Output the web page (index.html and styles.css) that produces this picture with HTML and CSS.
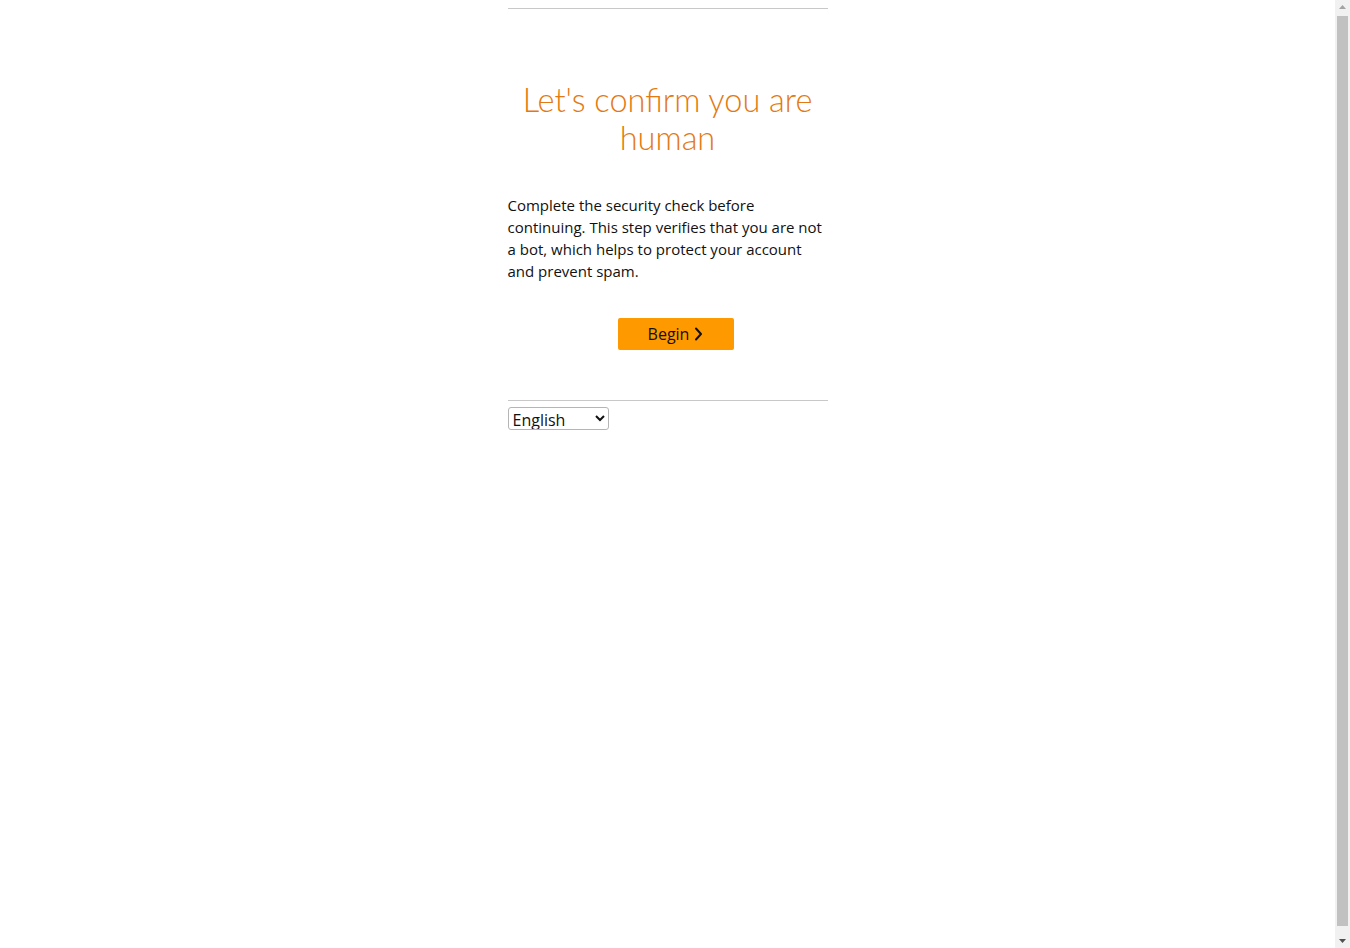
FILE: index.html
```html
<!DOCTYPE html>
<html lang="en">
<head>
    <meta charset="UTF-8">
    <meta name="viewport" content="width=device-width, initial-scale=1.0">
    <title>Security Check</title>
    <link rel="stylesheet" href="styles.css">
</head>
<body>
    <div class="page">
        <hr class="divider">

        <h1 class="title">Let's confirm you are human</h1>

        <p class="intro">Complete the security check before continuing. This step verifies that you are not a bot, which helps to protect your account and prevent spam.</p>

        <div class="actions">
            <button class="begin-btn" type="button">
                Begin
                <svg class="chevron" width="9" height="14" viewBox="0 0 9 14" aria-hidden="true">
                    <path d="M2 1.5 L7 7 L2 12.5" fill="none" stroke="#111" stroke-width="2" stroke-linecap="round" stroke-linejoin="round"/>
                </svg>
            </button>
        </div>

        <hr class="divider">

        <select class="language">
            <option>English</option>
            <option>Deutsch</option>
            <option>Español</option>
            <option>Français</option>
            <option>Italiano</option>
            <option>日本語</option>
        </select>
    </div>

    <!-- window scrollbar -->
    <div class="scrollbar" aria-hidden="true">
        <svg class="scroll-arrow" width="15" height="16" viewBox="0 0 15 16">
            <path d="M4 9 L7.5 5 L11 9 Z" fill="#a3a3a3"/>
        </svg>
        <div class="scroll-track">
            <div class="scroll-thumb"></div>
        </div>
        <svg class="scroll-arrow" width="15" height="16" viewBox="0 0 15 16">
            <path d="M4 7 L7.5 11 L11 7 Z" fill="#505050"/>
        </svg>
    </div>
</body>
</html>
```

FILE: styles.css
```css
html {
    background-color: #fff;
}
body {
    margin: 8px 23px 8px 8px;
    min-height: 940px;
    font-family: "Open Sans", "Noto Sans", Arial, sans-serif;
    color: #111;
}
.page {
    width: 320px;
    margin: 0 auto;
}
.divider {
    margin: 0;
    border: 0;
    border-top: 1px solid #c8c8c8;
}
.title {
    margin: 72px 0 37px;
    font-family: Lato, "Open Sans", sans-serif;
    font-weight: 300;
    font-size: 32.5px;
    line-height: 38px;
    color: #e47911;
    text-align: center;
}
.intro {
    margin: 0 0 36px;
    font-size: 15px;
    line-height: 22px;
}
.actions {
    display: flex;
    justify-content: center;
    padding-left: 16px;
    margin-bottom: 50px;
}
.begin-btn {
    display: flex;
    align-items: center;
    justify-content: center;
    gap: 5px;
    width: 116px;
    height: 32px;
    border: 0;
    border-radius: 2px;
    background-color: #ff9900;
    font-family: inherit;
    font-size: 16px;
    color: #111;
    cursor: pointer;
}
.language {
    margin-top: 6px;
    width: 101px;
    height: 23px;
    font-family: inherit;
    font-size: 16px;
    color: #111;
    border: 1px solid #b5b5b5;
    border-radius: 3px;
    background-color: #fff;
}

.scrollbar {
    position: fixed;
    top: 0;
    right: 0;
    bottom: 0;
    width: 15px;
    display: flex;
    flex-direction: column;
    background-color: #f1f1f1;
}
.scroll-arrow {
    display: block;
    flex: none;
}
.scroll-track {
    flex: 1;
    padding: 0 2px 6px;
}
.scroll-thumb {
    height: 100%;
    background-color: #c1c1c1;
}
```
